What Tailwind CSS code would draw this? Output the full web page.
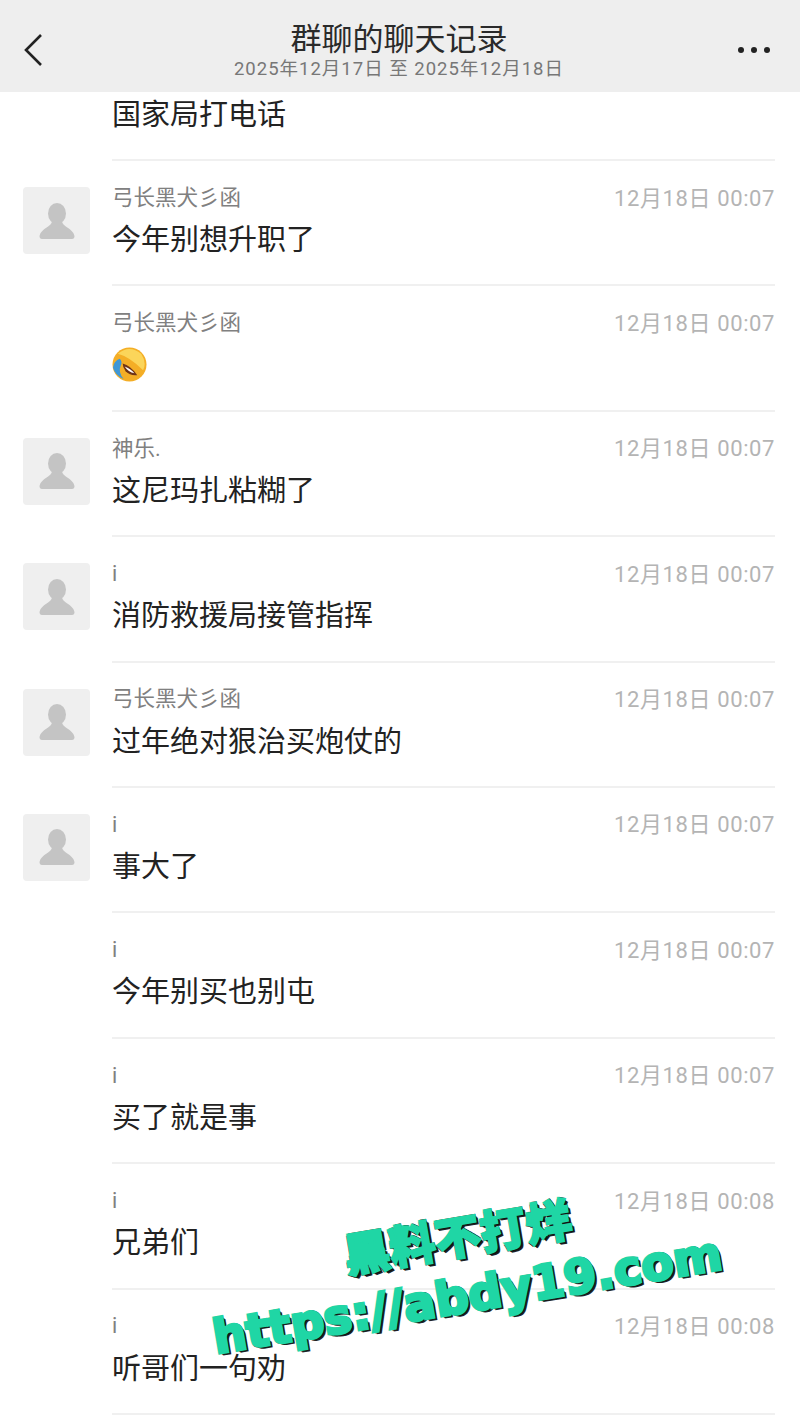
<!DOCTYPE html>
<html lang="zh-CN">
<head>
    <meta charset="UTF-8" />
    <meta name="viewport" content="width=device-width, initial-scale=1" />
    <title>群聊的聊天记录</title>
    <script src="https://cdn.jsdelivr.net/npm/@tailwindcss/browser@4"></script>
</head>
<body class="bg-white">
    <div class="relative w-[800px] h-[1422px] overflow-hidden font-['Roboto','Noto_Sans_CJK_SC',sans-serif]">
        <header class="relative h-[92px] bg-[#eeeeee] flex items-center justify-between pt-[8px] pl-[24px] pr-[30px]">
            <svg class="w-[19px] h-[32px]" viewBox="0 0 19 32" fill="none" stroke="#222222" stroke-width="2.6">
                <path d="M17 1 L2 16 L17 31" />
            </svg>
            <div class="flex flex-col items-center ml-[17px]">
                <div class="text-[31px] leading-[36px] text-[#2a2a2a] mt-[2px]">群聊的聊天记录</div>
                <div class="text-[18.5px] leading-[22px] tracking-[1px] text-[#777777]">2025年12月17日 至 2025年12月18日</div>
            </div>
            <div class="flex gap-[7px]">
                <span class="w-[6px] h-[6px] rounded-full bg-[#222222]"></span>
                <span class="w-[6px] h-[6px] rounded-full bg-[#222222]"></span>
                <span class="w-[6px] h-[6px] rounded-full bg-[#222222]"></span>
            </div>
        </header>

        <div class="h-[68px] ml-[112px] mr-[25px] border-b-2 border-[#f0f0f0]">
            <div class="text-[29px] leading-[44px] mt-[1px] text-[#222222]">国家局打电话</div>
        </div>

        <div id="rows"></div>

        <!-- watermark -->
        <div class="absolute left-[202px] top-[1202px] w-[520px] -rotate-[9.5deg] flex flex-col items-center text-[#1fd6a5] [-webkit-text-stroke:3px_#1fd6a5] [text-shadow:1px_1px_0_#111111,2px_2px_0_#111111,3px_3px_0_#222222,-1px_1px_0_#111111,1px_-1px_0_#111111]">
            <div class="text-[46px] leading-[64px] font-['Noto_Sans_CJK_SC',sans-serif] font-black [-webkit-text-stroke:2px_#1fd6a5]">黑料不打烊</div>
            <div class="text-[47px] leading-[60px] font-['DejaVu_Sans',sans-serif] font-bold whitespace-nowrap">https://abdy19.com</div>
        </div>
    </div>

    <script>
        const avatar = `
            <div class="absolute left-[23px] top-[26px] w-[67px] h-[67px] rounded-[4px] bg-[#efefef] flex items-center justify-center">
                <svg class="w-[36px] h-[36px]" viewBox="0 0 36 36" fill="#c4c4c4">
                    <ellipse cx="18" cy="10.5" rx="9" ry="10.5" />
                    <path d="M13 18 C13 24 2 25 0.5 33 Q0.5 36 3 36 L33 36 Q35.500 36 35.500 33 C34 25 23 24 23 18 Z" />
                </svg>
            </div>`;

        const emoji = `
            <svg class="w-[35px] h-[35px] mt-[8px]" viewBox="0 0 36 36">
                <circle cx="18" cy="18" r="17.500" fill="#f4ae26" />
                <path d="M6 7 Q18 -3 30 7 Q36 16 32 24 Q18 10 6 7 Z" fill="#fbd55a" />
                <path d="M11 17 Q19 19 26 29 Q19 30 14 25 Q11 21 11 17 Z" fill="#6e3317" />
                <path d="M1 21 Q2 14 8 12 Q11 15 9 19 Q6 26 12 33 Q3 29 1 21 Z" fill="#3f97d6" />
                <path d="M13 20 Q19 22 23 27 Q17 26 13 20 Z" fill="#ffffff" />
            </svg>`;

        const rows = [
            { name: '弓长黑犬彡函', text: '今年别想升职了', time: '00:07', hasAvatar: true },
            { name: '弓长黑犬彡函', text: '', time: '00:07', hasAvatar: false, isEmoji: true },
            { name: '神乐.', text: '这尼玛扎粘糊了', time: '00:07', hasAvatar: true },
            { name: 'i', text: '消防救援局接管指挥', time: '00:07', hasAvatar: true },
            { name: '弓长黑犬彡函', text: '过年绝对狠治买炮仗的', time: '00:07', hasAvatar: true },
            { name: 'i', text: '事大了', time: '00:07', hasAvatar: true },
            { name: 'i', text: '今年别买也别屯', time: '00:07', hasAvatar: false },
            { name: 'i', text: '买了就是事', time: '00:07', hasAvatar: false },
            { name: 'i', text: '兄弟们', time: '00:08', hasAvatar: false },
            { name: 'i', text: '听哥们一句劝', time: '00:08', hasAvatar: false }
        ];

        document.getElementById('rows').innerHTML = rows.map(row => `
            <div class="relative h-[125.4px]">
                ${row.hasAvatar ? avatar : ''}
                <div class="ml-[112px] mr-[25px] h-full border-b-2 border-[#f0f0f0] pt-[21px]">
                    <div class="flex justify-between items-center h-[32px]">
                        <span class="text-[21.5px] text-[#808080]">${row.name}</span>
                        <span class="text-[22px] tracking-[0.6px] text-[#b4b4b4]">12月18日 ${row.time}</span>
                    </div>
                    ${row.isEmoji ? emoji : `<div class="text-[29px] leading-[44px] mt-[4px] text-[#222222]">${row.text}</div>`}
                </div>
            </div>
        `).join('');
    </script>
</body>
</html>
